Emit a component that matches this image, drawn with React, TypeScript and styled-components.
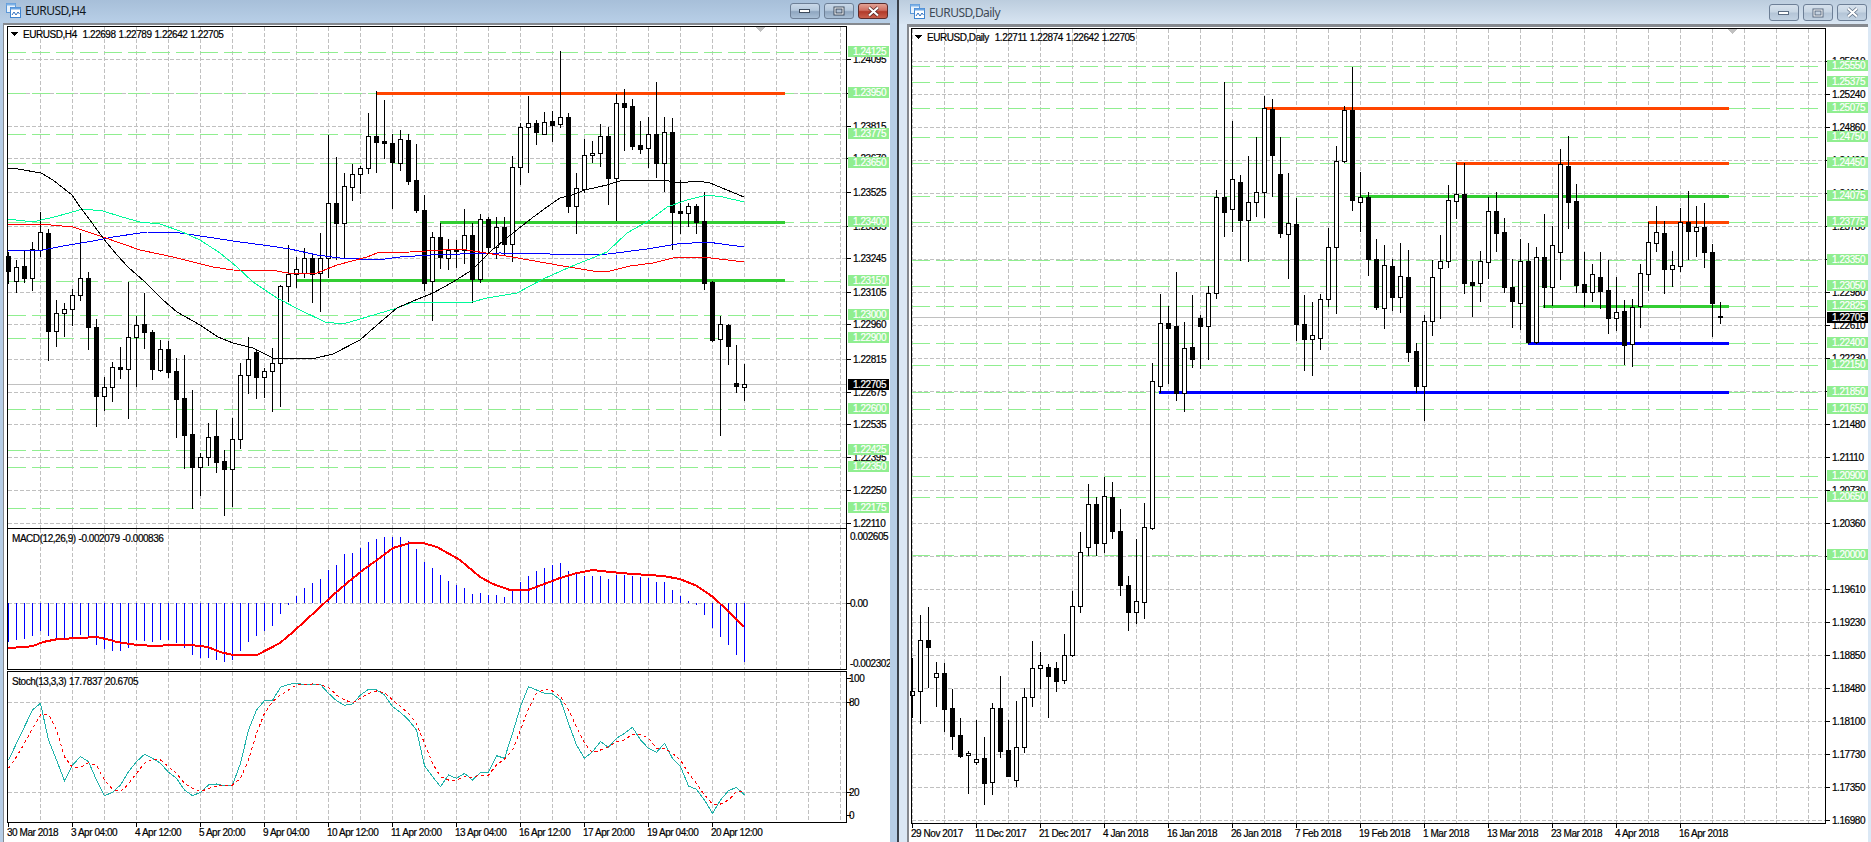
import React from "react";
import styled, { createGlobalStyle } from "styled-components";

type Candle = [number, number, number, number, number]; // high, body top, body bottom, low, 1 = white
type Pt = [number, number];

const h4Candles: Candle[] = [
  [252,256,271,283,0],[260,267,281,292,1],[251,266,278,282,0],[242,249,278,290,1],[212,232,250,256,1],[229,233,331,360,0],
  [300,313,331,346,1],[303,309,313,336,1],[289,295,309,325,1],[233,278,295,300,1],[272,278,327,349,0],[319,327,396,426,0],
  [377,387,396,410,1],[362,367,387,401,1],[347,367,369,378,0],[282,337,369,418,1],[316,325,337,386,1],[293,324,332,348,0],
  [330,332,369,379,0],[340,349,370,371,1],[341,349,372,377,0],[358,371,399,437,0],[355,398,435,468,0],[390,434,467,508,0],
  [453,457,467,495,1],[423,437,457,465,1],[410,436,462,472,0],[450,461,469,515,0],[418,439,469,506,1],[363,375,439,448,1],
  [337,359,375,393,1],[350,352,377,398,0],[368,371,377,397,1],[348,363,371,411,1],[285,286,363,406,1],[245,274,286,301,1],
  [257,269,274,287,1],[248,258,273,277,1],[253,258,274,302,0],[233,258,273,311,1],[135,203,258,277,1],[157,203,223,259,0],
  [173,186,223,257,1],[164,174,187,200,1],[166,168,174,193,1],[113,136,168,173,1],[91,136,142,172,0],[100,141,143,158,0],
  [134,143,162,208,0],[130,139,163,170,1],[134,140,181,184,0],[144,180,210,212,0],[195,210,283,290,0],[232,237,281,320,1],
  [223,237,257,268,0],[239,250,258,269,1],[240,249,251,267,0],[209,235,250,263,1],[223,235,279,302,0],[214,219,279,282,1],
  [217,219,247,252,0],[217,227,247,258,1],[217,227,244,255,0],[156,167,244,261,1],[123,127,167,184,1],[96,123,127,172,1],
  [120,123,132,144,0],[112,122,134,134,1],[111,121,125,141,0],[51,117,124,127,1],[113,117,206,212,0],[173,188,206,233,1],
  [139,155,189,192,1],[141,153,155,162,1],[124,136,153,166,1],[127,136,178,204,0],[94,103,178,220,1],[89,103,107,150,0],
  [99,106,146,149,0],[121,145,149,153,0],[117,134,148,167,1],[82,134,163,177,0],[117,132,163,191,1],[118,132,212,249,0],
  [180,211,213,233,0],[203,206,213,226,1],[204,206,222,233,0],[192,221,283,289,0],[281,282,340,341,0],[316,324,339,435,1],
  [324,325,346,364,0],[345,383,386,392,0],[364,384,387,400,1],
];

const dailyCandles: Candle[] = [
  [658,691,695,717,1],[615,640,691,723,1],[607,640,647,687,0],[662,673,677,706,1],[663,673,709,731,0],[689,708,736,749,0],
  [718,735,756,757,0],[751,753,755,793,1],[720,759,762,764,1],[737,758,783,804,0],[703,708,782,794,1],[676,708,751,757,0],
  [720,750,776,776,0],[701,747,780,786,1],[688,697,747,752,1],[641,668,697,706,1],[652,665,668,688,1],[664,667,676,717,0],
  [662,668,681,691,0],[634,655,680,683,1],[591,606,655,656,1],[532,552,606,612,1],[484,504,547,555,1],[497,504,543,555,0],
  [477,496,543,552,1],[482,497,531,538,0],[509,531,585,595,0],[576,585,612,630,0],[539,601,612,623,1],[503,527,602,618,1],
  [363,381,528,529,1],[294,323,386,392,1],[306,323,328,383,0],[272,326,393,400,0],[322,348,393,411,1],[295,347,359,367,0],
  [315,318,326,368,0],[286,293,326,359,1],[190,197,293,298,1],[82,197,212,236,0],[121,179,209,231,1],[175,182,220,260,0],
  [156,202,220,261,1],[137,192,202,216,1],[96,108,192,217,1],[99,109,155,196,0],[137,174,233,237,0],[173,223,234,278,1],
  [198,224,324,340,0],[295,324,339,370,0],[302,335,339,375,1],[294,299,338,349,1],[228,247,299,306,1],[146,161,247,313,1],
  [106,110,161,162,1],[67,110,200,210,0],[172,197,202,231,1],[192,197,259,275,0],[239,259,307,309,0],[245,265,308,328,1],
  [259,266,297,310,0],[243,276,297,312,1],[250,277,352,361,0],[343,351,386,392,0],[315,321,386,420,1],[260,277,321,335,1],
  [235,261,268,318,1],[185,200,261,267,1],[163,194,201,218,1],[163,194,283,293,0],[261,282,285,316,0],[251,261,283,301,1],
  [197,211,262,278,1],[192,211,233,251,0],[218,232,287,292,0],[259,287,301,327,0],[239,261,303,329,1],[243,261,342,343,0],
  [247,257,342,343,1],[214,257,287,307,0],[226,245,287,305,1],[149,164,252,279,1],[136,166,202,228,0],[184,201,285,292,0],
  [252,284,292,306,0],[264,274,292,301,1],[252,277,291,308,0],[260,290,318,333,0],[277,312,318,330,1],[300,311,345,364,0],
  [299,307,344,366,1],[264,273,306,327,1],[222,242,274,290,1],[206,232,243,251,1],[221,233,269,293,0],[251,265,269,286,1],
  [208,222,266,271,1],[191,222,231,259,0],[206,227,231,256,1],[203,227,252,267,0],[244,252,303,336,0],[302,316,317,323,0],
];

const maBlack: Pt[] = [[8,168],[18,169],[41,173],[53,180],[72,195],[80,207],[90,220],[97,230],[107,243],[117,255],[128,267],[145,282],[163,300],[177,312],[200,325],[218,337],[233,343],[253,348],[273,358],[287,358],[312,359],[333,354],[360,340],[377,325],[397,308],[413,301],[433,293],[453,282],[472,270],[492,250],[513,233],[532,218],[547,207],[560,198],[572,195],[585,190],[607,185],[623,180],[663,180],[680,183],[697,181],[710,183],[727,190],[744,197]];
const maSpring: Pt[] = [[8,219],[33,222],[58,216],[83,209],[103,211],[122,217],[140,222],[160,224],[180,231],[200,240],[220,253],[237,267],[253,282],[277,298],[300,310],[325,322],[343,324],[367,317],[397,308],[413,302],[440,302],[472,302],[487,298],[517,293],[543,279],[570,267],[607,252],[627,233],[650,220],[667,207],[687,200],[707,195],[723,197],[744,202]];
const maBlue: Pt[] = [[8,250],[43,250],[63,246],[93,241],[113,237],[147,232],[180,233],[207,237],[233,241],[270,246],[290,249],[317,255],[340,258],[377,260],[400,257],[430,255],[460,254],[500,253],[550,254],[573,255],[608,254],[647,249],[677,244],[707,242],[744,247]];
const maRed: Pt[] = [[8,225],[40,224],[73,227],[103,237],[140,250],[173,257],[213,267],[233,270],[277,271],[293,274],[317,273],[337,265],[367,257],[377,253],[410,252],[460,249],[512,257],[563,266],[593,271],[610,271],[630,266],[653,263],[677,257],[703,257],[744,262]];
const macdLine: Pt[] = [[8,648],[25,647],[33,646],[43,642],[58,639],[80,638],[97,637],[110,640],[117,642],[137,645],[157,646],[170,645],[190,645],[208,647],[220,652],[233,655],[257,655],[280,643],[293,632],[317,610],[333,595],[347,583],[363,570],[377,560],[393,548],[410,543],[423,543],[437,547],[460,560],[480,577],[493,584],[510,590],[528,590],[547,583],[560,578],[577,573],[593,570],[610,572],[633,574],[663,576],[680,579],[697,586],[713,597],[727,610],[744,627]];

const macdBars = [245,240,237,228,213,228,235,240,238,225,228,255,267,273,273,263,240,243,246,240,240,250,263,285,294,294,300,305,300,272,245,228,213,197,162,134,108,84,69,57,30,15,-18,-21,-36,-54,-63,-69,-69,-69,-57,-33,5,25,45,63,75,85,102,100,105,105,110,90,65,48,33,25,15,10,33,40,47,47,48,57,45,45,47,50,55,65,65,90,107,123,134,165,205,232,255,285,305];
const stochMain = [600,550,500,450,430,540,600,662,615,590,605,660,707,697,675,635,605,583,595,610,637,655,690,707,697,675,672,678,675,610,510,450,422,421,382,373,370,374,373,374,400,422,436,432,405,388,390,405,440,457,480,510,617,650,680,645,655,640,660,637,637,587,595,520,440,380,390,400,402,420,490,555,595,575,545,562,535,520,502,540,565,577,550,595,620,678,688,720,760,720,692,682,705];
const stochSignal = [625,590,550,505,465,463,510,590,622,622,608,617,660,688,695,672,640,610,597,600,620,640,670,685,695,685,678,675,675,655,600,520,460,425,405,390,375,374,372,375,382,405,420,428,415,400,393,398,420,440,460,490,550,610,650,660,660,650,652,645,645,615,597,570,510,445,400,388,393,410,450,500,550,578,570,560,545,540,522,522,535,565,565,580,600,640,670,705,732,732,720,695,695];

type Level = [number, string];
const h4Grid: Level[] = [[59,"1.24095"],[93,"1.23955"],[126,"1.23815"],[158,"1.23670"],[192,"1.23525"],[226,"1.23385"],[258,"1.23245"],[292,"1.23105"],[324,"1.22960"],[359,"1.22815"],[392,"1.22675"],[424,"1.22535"],[457,"1.22395"],[490,"1.22250"],[523,"1.22110"]];
const h4Green: Level[] = [[52,"1.24125"],[93,"1.23950"],[134,"1.23775"],[163,"1.23650"],[222,"1.23400"],[281,"1.23150"],[315,"1.23000"],[338,"1.22900"],[409,"1.22600"],[450,"1.22425"],[467,"1.22350"],[508,"1.22175"]];
const dailyGrid: Level[] = [[61,"1.25610"],[94,"1.25240"],[127,"1.24860"],[160,"1.24490"],[193,"1.24110"],[226,"1.23730"],[259,"1.23360"],[292,"1.22980"],[325,"1.22610"],[358,"1.22230"],[391,"1.21850"],[424,"1.21480"],[457,"1.21110"],[490,"1.20730"],[523,"1.20360"],[556,"1.19980"],[589,"1.19610"],[622,"1.19230"],[655,"1.18850"],[688,"1.18480"],[721,"1.18100"],[754,"1.17730"],[787,"1.17350"],[820,"1.16980"]];
const dailyGreen: Level[] = [[66,"1.25550"],[82,"1.25375"],[108,"1.25075"],[137,"1.24750"],[163,"1.24450"],[196,"1.24075"],[222,"1.23775"],[260,"1.23350"],[286,"1.23050"],[306,"1.22825"],[343,"1.22400"],[365,"1.22150"],[392,"1.21850"],[409,"1.21650"],[476,"1.20900"],[497,"1.20650"],[555,"1.20000"]];

const h4Dates: [number, string][] = [[8,"30 Mar 2018"],[72,"3 Apr 04:00"],[136,"4 Apr 12:00"],[200,"5 Apr 20:00"],[264,"9 Apr 04:00"],[328,"10 Apr 12:00"],[392,"11 Apr 20:00"],[456,"13 Apr 04:00"],[520,"16 Apr 12:00"],[584,"17 Apr 20:00"],[648,"19 Apr 04:00"],[712,"20 Apr 12:00"]];
const dailyDates: [number, string][] = [[912,"29 Nov 2017"],[976,"11 Dec 2017"],[1040,"21 Dec 2017"],[1104,"4 Jan 2018"],[1168,"16 Jan 2018"],[1232,"26 Jan 2018"],[1296,"7 Feb 2018"],[1360,"19 Feb 2018"],[1424,"1 Mar 2018"],[1488,"13 Mar 2018"],[1552,"23 Mar 2018"],[1616,"4 Apr 2018"],[1680,"16 Apr 2018"]];

const GlobalStyle = createGlobalStyle`
  html, body { margin: 0; padding: 0; height: 100%; overflow: hidden; background: #fff; }
  * { box-sizing: border-box; }
`;

const Desktop = styled.div`
  display: flex;
  width: 1871px;
  height: 842px;
`;

const Window = styled.section<{ $active: boolean }>`
  display: flex;
  flex-direction: column;
  height: 842px;
  flex: none;
  width: ${(p) => (p.$active ? 899 : 972)}px;
  padding: ${(p) => (p.$active ? "0 7px 0 3px" : "0 3px 0 8px")};
  background: ${(p) => (p.$active ? "#b6cde6" : "#dbe8f5")};
  border-right: ${(p) => (p.$active ? "2px solid #39404a" : "none")};
`;

const TitleBar = styled.header<{ $active: boolean }>`
  display: flex;
  align-items: flex-start;
  flex: none;
  height: ${(p) => (p.$active ? 23 : 24)}px;
  margin: ${(p) => (p.$active ? "0 -7px 0 -3px" : "0 -3px 0 -8px")};
  padding: ${(p) => (p.$active ? "3px 9px 0 6px" : "4px 4px 0 11px")};
  background: ${(p) =>
    p.$active
      ? "linear-gradient(180deg, #a7bfd9 0%, #b8cfe7 100%)"
      : "linear-gradient(180deg, #bccdde 0%, #d8e5f2 100%)"};
`;

const AppIcon = styled.svg`
  display: block;
  width: 15px;
  height: 15px;
  flex: none;
`;

const TitleText = styled.span<{ $active: boolean }>`
  flex: 1;
  margin-left: 4px;
  margin-top: ${(p) => (p.$active ? 0 : 1)}px;
  font: 12px/16px "Noto Sans", "Open Sans", sans-serif;
  letter-spacing: -0.55px;
  color: ${(p) => (p.$active ? "#101820" : "#3f4a56")};
`;

const Controls = styled.div`
  display: flex;
  gap: 4px;
`;

const CaptionButton = styled.button<{ $tall: boolean; $close?: boolean; $active: boolean }>`
  display: flex;
  align-items: center;
  justify-content: center;
  width: 30px;
  height: ${(p) => (p.$tall ? 17 : 16)}px;
  padding: 0;
  border: 1px solid ${(p) => (p.$close && p.$active ? "#5b2b2b" : "#6d7f96")};
  border-radius: 3px;
  background: ${(p) =>
    p.$close && p.$active
      ? "linear-gradient(180deg, #e2a295 0%, #cf6f62 45%, #b23a2a 55%, #c9604d 100%)"
      : p.$active
      ? "linear-gradient(180deg, #c9d8e8 0%, #b5c8dc 45%, #8fa6c0 55%, #a9bfd6 100%)"
      : "linear-gradient(180deg, #d6e1ec 0%, #c8d6e4 45%, #b4c5d7 55%, #c2d2e2 100%)"};
`;

const Frame = styled.div<{ $active: boolean }>`
  display: flex;
  flex-direction: column;
  flex: 1;
  min-height: 0;
  background: #fff;
  border-top: ${(p) => (p.$active ? 2 : 3)}px solid #85898f;
  border-left: ${(p) => (p.$active ? 1 : 2)}px solid #85898f;
`;

const ChartSvg = styled.svg`
  display: block;
  flex: none;
  line, rect, polyline, polygon {
    shape-rendering: crispEdges;
  }
`;

const Label = styled.text<{ $light?: boolean; $legend?: boolean }>`
  font-family: "Liberation Sans", Arial, sans-serif;
  font-size: 10px;
  letter-spacing: -0.45px;
  word-spacing: ${(p) => (p.$legend ? 0.6 : 0)}px;
  white-space: pre;
  fill: ${(p) => (p.$light ? "#fff" : "#000")};
  stroke: ${(p) => (p.$light ? "#fff" : "#000")};
  stroke-width: 0.2px;
`;

const pts = (a: Pt[]) => a.map((p) => p.join(",")).join(" ");
const seriesPts = (vals: number[], x0: number) => vals.map((z, i) => `${x0 + 8 * i + 0.5},${560 + z / 3}`).join(" ");

function Candles({ data, x0 }: { data: Candle[]; x0: number }) {
  return (
    <g>
      {data.map(([h, t, b, l, white], i) => {
        const c = x0 + 8 * i;
        return (
          <g key={i}>
            <line x1={c + 0.5} x2={c + 0.5} y1={h} y2={l + 1} stroke="#000" />
            {white ? (
              <rect x={c - 1.5} y={t + 0.5} width={4} height={b - t} fill="#fff" stroke="#000" />
            ) : (
              <rect x={c - 2} y={t} width={5} height={b - t + 1} fill="#000" />
            )}
          </g>
        );
      })}
    </g>
  );
}

function Grid({ xs, ys, x1, x2, y1, y2 }: { xs: number[]; ys: number[]; x1: number; x2: number; y1: number; y2: number }) {
  return (
    <g stroke="#c0c0c0" strokeDasharray="4 2">
      {xs.map((x) => (
        <line key={x} x1={x + 0.5} x2={x + 0.5} y1={y1} y2={y2} />
      ))}
      {ys.map((y) => (
        <line key={y} x1={x1} x2={x2} y1={y + 0.5} y2={y + 0.5} />
      ))}
    </g>
  );
}

function GreenLevels({ levels, x1, x2 }: { levels: Level[]; x1: number; x2: number }) {
  return (
    <g stroke="#90ee90" strokeDasharray="18 6">
      {levels.map(([y]) => (
        <line key={y} x1={x1} x2={x2} y1={y + 0.5} y2={y + 0.5} />
      ))}
    </g>
  );
}

function Trend({ y, x1, x2, color }: { y: number; x1: number; x2: number; color: string }) {
  return <line x1={x1} x2={x2} y1={y + 0.5} y2={y + 0.5} stroke={color} strokeWidth={3} />;
}

function PriceAxis({ grid, green, axisX, boxX, textX, price, priceY }: { grid: Level[]; green: Level[]; axisX: number; boxX: number; textX: number; price: string; priceY: number }) {
  return (
    <g>
      {grid.map(([y, label]) => (
        <g key={y}>
          <line x1={axisX} x2={axisX + 5} y1={y + 0.5} y2={y + 0.5} stroke="#000" />
          <Label x={textX} y={y + 4}>{label}</Label>
        </g>
      ))}
      {green.map(([y, label]) => (
        <g key={label}>
          <rect x={boxX} y={y - 6} width={41} height={11} fill="#90ee90" />
          <Label $light x={textX} y={y + 3}>{label}</Label>
        </g>
      ))}
      <rect x={boxX} y={priceY - 5} width={41} height={11} fill="#000" />
      <Label $light x={textX} y={priceY + 4}>{price}</Label>
    </g>
  );
}

const h4Xs = Array.from({ length: 26 }, (_, i) => 40 + 32 * i);
const dailyXs = Array.from({ length: 29 }, (_, i) => 912 + 32 * i);

function IconGlyph() {
  return (
    <AppIcon viewBox="0 0 15 15">
      <rect x="0.5" y="0.5" width="9" height="9" fill="#e8f2fc" stroke="#5a97d8" />
      <rect x="0.5" y="0.5" width="9" height="2" fill="#7fb2e6" />
      <rect x="4.5" y="4.5" width="10" height="10" fill="#fff" stroke="#3f84d0" />
      <rect x="4.5" y="4.5" width="10" height="2" fill="#6aa4e2" />
      <polyline points="6,12 8,9 10,12 12,9 13.5,11" fill="none" stroke="#2f6fbf" strokeWidth="1" />
    </AppIcon>
  );
}

function MinGlyph({ active }: { active: boolean }) {
  return (
    <svg width="12" height="6" viewBox="0 0 12 6">
      <rect x="0.5" y="1.5" width="10" height="3" fill="#fff" stroke={active ? "#3c4a5c" : "#5a6b80"} />
    </svg>
  );
}

function MaxGlyph({ active }: { active: boolean }) {
  return (
    <svg width="12" height="10" viewBox="0 0 12 10">
      <rect x="1" y="1" width="10" height="8" fill="#fff" stroke={active ? "#3c4a5c" : "#5a6b80"} strokeWidth="1" />
      <rect x="3" y="3" width="6" height="4" fill={active ? "#aebfd3" : "#c5d3e2"} stroke={active ? "#3c4a5c" : "#5a6b80"} strokeWidth="1" />
    </svg>
  );
}

function CloseGlyph({ active }: { active: boolean }) {
  return (
    <svg width="13" height="11" viewBox="0 0 13 11">
      <path d="M2 1.5 L11 9.5 M11 1.5 L2 9.5" stroke={active ? "#4a2020" : "#5a6b80"} strokeWidth="3.6" fill="none" />
      <path d="M2 1.5 L11 9.5 M11 1.5 L2 9.5" stroke="#fff" strokeWidth="2.2" fill="none" />
    </svg>
  );
}

function Title({ active, text }: { active: boolean; text: string }) {
  return (
    <TitleBar $active={active}>
      <IconGlyph />
      <TitleText $active={active}>{text}</TitleText>
      <Controls>
        <CaptionButton $tall={!active} $active={active}><MinGlyph active={active} /></CaptionButton>
        <CaptionButton $tall={!active} $active={active}><MaxGlyph active={active} /></CaptionButton>
        <CaptionButton $tall={!active} $active={active} $close><CloseGlyph active={active} /></CaptionButton>
      </Controls>
    </TitleBar>
  );
}

function H4Window() {
  return (
    <Window $active>
      <Title active text="EURUSD,H4" />
      <Frame $active>
        <ChartSvg width={886} height={503} viewBox="4 25 886 503">
          <Grid xs={h4Xs} ys={h4Grid.map((g) => g[0])} x1={8} x2={846} y1={27} y2={528} />
          <line x1={8} x2={846} y1={384.5} y2={384.5} stroke="#c0c0c0" />
          <GreenLevels levels={h4Green} x1={8} x2={841} />
          <Trend y={93} x1={377} x2={785} color="#ff4500" />
          <Trend y={222} x1={440} x2={785} color="#32cd32" />
          <Trend y={280} x1={297} x2={785} color="#32cd32" />
          <Candles data={h4Candles} x0={8} />
          <polyline points={pts(maBlue)} fill="none" stroke="#0000ff" />
          <polyline points={pts(maRed)} fill="none" stroke="#ff0000" />
          <polyline points={pts(maSpring)} fill="none" stroke="#00fa9a" />
          <polyline points={pts(maBlack)} fill="none" stroke="#000" />
          <polygon points="756,27 765,27 760.5,32" fill="#c0c0c0" />
          <rect x={7} y={26} width={840} height={1} fill="#000" />
          <rect x={7} y={26} width={1} height={502} fill="#000" />
          <rect x={846} y={26} width={1} height={502} fill="#000" />
          <polygon points="11,32 18,32 14.5,36" fill="#000" />
          <Label $legend x={23} y={38}>{"EURUSD,H4  1.22698 1.22789 1.22642 1.22705"}</Label>
          <PriceAxis grid={h4Grid} green={h4Green} axisX={846} boxX={848} textX={853} price="1.22705" priceY={384} />
        </ChartSvg>
        <ChartSvg width={886} height={142} viewBox="4 528 886 142">
          <Grid xs={h4Xs} ys={[603]} x1={8} x2={846} y1={529} y2={669} />
          <g stroke="#0000ff">
            {macdBars.map((z, i) => (
              <line key={i} x1={8 + 8 * i + 0.5} x2={8 + 8 * i + 0.5} y1={603} y2={560 + z / 3} />
            ))}
          </g>
          <polyline points={pts(macdLine)} fill="none" stroke="#ff0000" strokeWidth={2} />
          <rect x={7} y={528} width={840} height={1} fill="#000" />
          <rect x={7} y={669} width={840} height={1} fill="#000" />
          <rect x={7} y={528} width={1} height={142} fill="#000" />
          <rect x={846} y={528} width={1} height={142} fill="#000" />
          <line x1={846} x2={851} y1={603.5} y2={603.5} stroke="#000" />
          <Label $legend x={12} y={542}>MACD(12,26,9) -0.002079 -0.000836</Label>
          <Label x={850} y={540}>0.002605</Label>
          <Label x={850} y={607}>0.00</Label>
          <Label x={850} y={667}>-0.002302</Label>
        </ChartSvg>
        <ChartSvg width={886} height={172} viewBox="4 670 886 172">
          <Grid xs={h4Xs} ys={[702, 792]} x1={8} x2={846} y1={672} y2={822} />
          <polyline points={seriesPts(stochMain, 8)} fill="none" stroke="#20b2aa" />
          <polyline points={seriesPts(stochSignal, 8)} fill="none" stroke="#ff0000" strokeDasharray="3 3" />
          <rect x={7} y={671} width={840} height={1} fill="#000" />
          <rect x={7} y={822} width={840} height={1} fill="#000" />
          <rect x={7} y={671} width={1} height={152} fill="#000" />
          <rect x={846} y={671} width={1} height={152} fill="#000" />
          {[[678, "100"], [702, "80"], [792, "20"], [815, "0"]].map(([y, label]) => (
            <g key={label as string}>
              <line x1={846} x2={851} y1={(y as number) + 0.5} y2={(y as number) + 0.5} stroke="#000" />
              <Label x={849} y={(y as number) + 4}>{label}</Label>
            </g>
          ))}
          <Label $legend x={12} y={685}>Stoch(13,3,3) 17.7837 20.6705</Label>
          {h4Dates.map(([x, label]) => (
            <g key={label}>
              <line x1={x + 0.5} x2={x + 0.5} y1={822} y2={827} stroke="#000" />
              <Label x={x - 1} y={836}>{label}</Label>
            </g>
          ))}
        </ChartSvg>
      </Frame>
    </Window>
  );
}

function DailyWindow() {
  return (
    <Window $active={false}>
      <Title active={false} text="EURUSD,Daily" />
      <Frame $active={false}>
        <ChartSvg width={959} height={815} viewBox="909 27 959 815">
          <Grid xs={dailyXs} ys={dailyGrid.map((g) => g[0])} x1={912} x2={1825} y1={29} y2={823} />
          <line x1={912} x2={1825} y1={317.5} y2={317.5} stroke="#c0c0c0" />
          <GreenLevels levels={dailyGreen} x1={912} x2={1818} />
          <Trend y={108} x1={1265} x2={1729} color="#ff4500" />
          <Trend y={163} x1={1456} x2={1729} color="#ff4500" />
          <Trend y={222} x1={1648} x2={1729} color="#ff4500" />
          <Trend y={196} x1={1360} x2={1729} color="#32cd32" />
          <Trend y={306} x1={1543} x2={1729} color="#32cd32" />
          <Trend y={343} x1={1528} x2={1729} color="#0000ff" />
          <Trend y={392} x1={1159} x2={1729} color="#0000ff" />
          <Candles data={dailyCandles} x0={912} />
          <polygon points="1728,29 1737,29 1732.5,34" fill="#c0c0c0" />
          <rect x={911} y={28} width={915} height={1} fill="#000" />
          <rect x={911} y={823} width={915} height={1} fill="#000" />
          <rect x={911} y={28} width={1} height={796} fill="#000" />
          <rect x={1825} y={28} width={1} height={796} fill="#000" />
          <polygon points="915,35 922,35 918.5,39" fill="#000" />
          <Label $legend x={927} y={41}>{"EURUSD,Daily  1.22711 1.22874 1.22642 1.22705"}</Label>
          <PriceAxis grid={dailyGrid} green={dailyGreen} axisX={1825} boxX={1827} textX={1832} price="1.22705" priceY={317} />
          {dailyDates.map(([x, label]) => (
            <g key={label}>
              <line x1={x + 0.5} x2={x + 0.5} y1={823} y2={828} stroke="#000" />
              <Label x={x - 1} y={837}>{label}</Label>
            </g>
          ))}
        </ChartSvg>
      </Frame>
    </Window>
  );
}

export default function App() {
  return (
    <Desktop>
      <GlobalStyle />
      <H4Window />
      <DailyWindow />
    </Desktop>
  );
}
